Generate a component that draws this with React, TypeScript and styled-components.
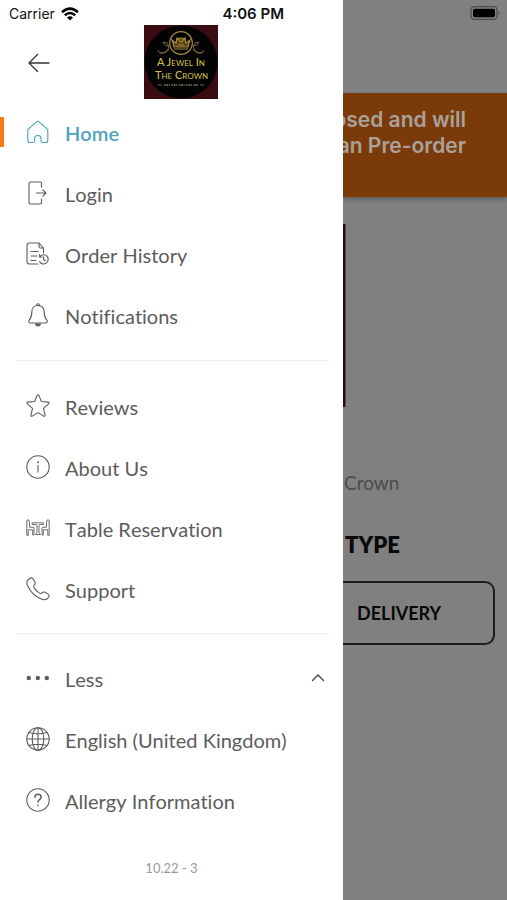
import React from "react";
import styled, { createGlobalStyle } from "styled-components";

const Global = createGlobalStyle`
  *, *::before, *::after { box-sizing: border-box; }
  body { margin: 0; background: #808080; font-family: Lato, sans-serif; font-variant-ligatures: none; }
  button { font: inherit; color: inherit; background: none; border: 0; padding: 0; cursor: pointer; }
`;

const Screen = styled.div`
  display: flex;
  min-height: 100vh;
`;

const Drawer = styled.aside`
  flex: 0 0 343px;
  background: #fff;
  color: #5c5c5c;
`;

const StatusBar = styled.div`
  display: grid;
  grid-template-columns: 1fr auto;
  align-items: center;
  height: 25px;
  padding: 3px 59px 0 9px;
  color: #111;
  font: 500 14px/20px Inter, sans-serif;
`;

const Carrier = styled.span`
  display: flex;
  align-items: center;
  gap: 6px;
  font-weight: 400;
`;

const Time = styled.time`
  font-size: 15px;
  font-weight: 600;
`;

const Header = styled.header`
  display: grid;
  grid-template-columns: 116px auto;
  align-items: center;
  height: 76px;
  padding-left: 28px;
`;

const BackButton = styled.button`
  display: flex;
  width: 22px;
`;

const Logo = styled.svg`
  display: block;
  align-self: start;
`;

const Group = styled.ul`
  list-style: none;
  margin: 0;
  padding: 0;
`;

const Divider = styled.hr<{ $tight?: boolean }>`
  height: 1px;
  margin: ${(p) => (p.$tight ? "14px 14px 13px 16px" : "15px 14px 14px 16px")};
  border: 0;
  background: #ededed;
`;

const ItemLink = styled.a<{ $active?: boolean }>`
  display: flex;
  align-items: center;
  gap: 15px;
  width: 100%;
  height: 61px;
  padding: 0 18px 0 26px;
  color: ${(p) => (p.$active ? "#4ba3bb" : "#5c5c5c")};
  font-size: 20px;
  font-weight: ${(p) => (p.$active ? 600 : 400)};
  text-align: left;
  text-decoration: none;
  background: ${(p) =>
    p.$active ? "linear-gradient(#f47a1c, #f47a1c) 0 16px / 4px 30px no-repeat" : "none"};
`;

const Label = styled.span`
  flex: 1;
  padding-top: 2px;
  line-height: 24px;
  font-kerning: none;
  white-space: nowrap;
`;

const Version = styled.p`
  margin: 28px 0 0;
  text-align: center;
  font-size: 13px;
  line-height: 20px;
  color: #999;
`;

const Page = styled.main`
  flex: 1;
  min-width: 0;
  overflow: hidden;
  background: #808080;
  color: #080808;
`;

const BatteryRow = styled.div`
  display: flex;
  justify-content: flex-end;
  height: 93px;
  padding: 6px 6px 0 0;
`;

const Banner = styled.div`
  display: flex;
  flex-direction: column;
  align-items: flex-end;
  height: 104px;
  padding: 14px 41px 0 0;
  background: #7a3a0a;
  box-shadow: 0 2px 4px rgba(0, 0, 0, 0.3);
  color: #aaa19b;
  font: 600 21px/26px Inter, sans-serif;
  white-space: nowrap;
`;

const Photo = styled.div`
  width: 3px;
  height: 183px;
  margin-top: 27px;
  background: linear-gradient(90deg, #270b10 66%, #55464a 66%);
`;

const ShopName = styled.p`
  margin: 64px 0 0;
  padding-left: 1px;
  font-size: 19px;
  line-height: 24px;
  color: #4b4b4b;
`;

const Heading = styled.h2`
  margin: 36px 0 0;
  padding-left: 2px;
  font-size: 22px;
  font-weight: 800;
  line-height: 28px;
`;

const OrderButton = styled.button`
  display: block;
  width: calc(100% - 12px);
  height: 64px;
  margin-top: 22px;
  padding-left: 14px;
  border: solid #1c1c1c;
  border-width: 2px 2px 2px 0;
  border-radius: 0 10px 10px 0;
  font-size: 18px;
  font-weight: 700;
  text-align: left;
`;

const Line = ({ children }: { children: React.ReactNode }) => (
  <svg width="24" height="24" viewBox="0 0 24 24" fill="none" stroke="currentColor" strokeWidth="1.1" strokeLinecap="round" strokeLinejoin="round" aria-hidden="true">
    {children}
  </svg>
);

const HomeIcon = () => (
  <Line>
    <path d="M1.800 9.700 10.800 1.600q1-.8 2 0L21.800 9.700V20.500q0 2-2 2h-3.300q-1.500 0-1.500-1.500v-3q0-2.500-3.200-2.500T8.600 18v3q0 1.500-1.500 1.500H3.800q-2 0-2-2Z" />
  </Line>
);
const LoginIcon = () => (
  <Line>
    <path d="M15.500 6V2.500q0-1.500-1.500-1.500H4.500Q3 1 3 2.500v19Q3 23 4.500 23H14q1.500 0 1.500-1.500V18M10.500 12h9.500M16.800 8.800 20 12l-3.200 3.200" />
  </Line>
);
const HistoryIcon = () => (
  <Line>
    <path d="M12 22H3.500Q1 22 1 19.500v-16Q1 1 3.500 1H13l4.500 5v5M13 1v3.500Q13 6 14.500 6h3M5 9.500h7M5 14h6M5 18.500h5" />
    <path d="M14 14.500a4.600 4.600 0 1 1-.5 5M13.600 12.500v2.500H16M17.500 15v2.500l2 1.200" />
  </Line>
);
const BellIcon = () => (
  <Line>
    <path d="M12 2.500c-4 0-6.200 3-6.200 6.500 0 4.800-1 6.300-2.600 8.200-1 1.300-.4 2.800 1.300 2.800h15c1.700 0 2.300-1.500 1.300-2.800-1.600-1.900-2.600-3.400-2.600-8.200 0-3.500-2.200-6.500-6.200-6.500ZM10.500 2.500Q10.500.8 12 .8t1.500 1.700" />
    <path d="M9.500 21h5q-.6 2-2.500 2t-2.500-2Z" fill="currentColor" />
  </Line>
);
const StarIcon = () => (
  <Line>
    <path d="M11 1.600q1-1.600 2 0l2.400 5.900 6.700.6q1.700.4.500 1.700l-5.100 4.500 1.600 6.800q.2 1.700-1.400 1L12 18.600l-5.700 3.500q-1.600.7-1.400-1l1.600-6.800L1.400 9.800Q.2 8.500 1.900 8.100l6.700-.6Z" />
  </Line>
);
const InfoIcon = () => (
  <Line>
    <circle cx="12" cy="12" r="11.200" />
    <path d="M12 10.500v6.500" />
    <circle cx="12" cy="7.300" r=".4" fill="currentColor" />
  </Line>
);
const TableIcon = () => (
  <Line>
    <g strokeWidth=".9">
      <path d="M.8 19V5q0-1.200 1.200-1.200T3.200 5l.5 6.300H7q1 0 1 1V19H6.700v-5.200H2.200V19ZM23.200 19V5q0-1.200-1.200-1.200T20.800 5l-.5 6.300H17q-1 0-1 1V19h1.300v-5.200h4.500V19Z" />
      <path d="M6.500 6.800h11v1.700h-3.700q-.8 0-.8 1v7.200l1.500 1.800h-5L11 16.700V9.500q0-1-.8-1H6.500Z" />
    </g>
  </Line>
);
const PhoneIcon = () => (
  <Line>
    <path d="M2.200 2.700 4 1.300Q5.800.3 7.300 2l1.500 2.700q1 1.800-.4 3.200-1.300 1.200-.2 3 1.800 3 4.900 5 1.800 1.200 3-.1 1.400-1.400 3.200-.5l2.800 1.800q1.700 1.200.6 3l-1.500 1.700q-2.200 1.700-6 .2Q6 18.500 1.400 8.500-.1 4.800 2.200 2.700Z" />
  </Line>
);
const DotsIcon = () => (
  <Line>
    <g fill="currentColor" stroke="none">
      <circle cx="2.800" cy="12" r="2.200" />
      <circle cx="11.800" cy="12" r="2.200" />
      <circle cx="20.800" cy="12" r="2.200" />
    </g>
  </Line>
);
const GlobeIcon = () => (
  <Line>
    <circle cx="12" cy="12" r="11.200" />
    <ellipse cx="12" cy="12" rx="5.800" ry="11.200" />
    <path d="M12 .8v22.400M.8 12h22.400M3 5.500q9 2.400 18 0M3 18.500q9-2.400 18 0" />
  </Line>
);
const HelpIcon = () => (
  <Line>
    <circle cx="12" cy="12" r="11.200" />
    <path strokeWidth="1.500" d="M8.900 9.300q0-3 3.100-3t3.100 2.800q0 1.400-1.600 2.500-1.500 1-1.500 2.500M12 17.200v.2" />
  </Line>
);

type Entry = { text: string; icon: React.ReactNode; active?: boolean };

const mainItems: Entry[] = [
  { text: "Home", icon: <HomeIcon />, active: true },
  { text: "Login", icon: <LoginIcon /> },
  { text: "Order History", icon: <HistoryIcon /> },
  { text: "Notifications", icon: <BellIcon /> },
];
const shopItems: Entry[] = [
  { text: "Reviews", icon: <StarIcon /> },
  { text: "About Us", icon: <InfoIcon /> },
  { text: "Table Reservation", icon: <TableIcon /> },
  { text: "Support", icon: <PhoneIcon /> },
];
const extraItems: Entry[] = [
  { text: "English (United Kingdom)", icon: <GlobeIcon /> },
  { text: "Allergy Information", icon: <HelpIcon /> },
];

const Items = ({ items }: { items: Entry[] }) =>
  items.map((item) => (
    <li key={item.text}>
      <ItemLink href="#" $active={item.active} aria-current={item.active ? "page" : undefined}>
        {item.icon}
        <Label>{item.text}</Label>
      </ItemLink>
    </li>
  ));

const CrownLogo = () => (
  <Logo width="74" height="74" viewBox="0 0 74 74" role="img" aria-label="A Jewel In The Crown">
    <rect width="74" height="74" fill="#3a0c12" />
    <circle cx="37" cy="37" r="36.500" fill="#030303" />
    <g fill="none" stroke="#a58a3c" strokeWidth="1.200">
      <circle cx="37" cy="18" r="11.300" />
      <path d="M25 21q-4 1-6-4 5 0 6 4-1 6-7 7-4 0-4-3M25 24q-3 5-9 4M49 21q4 1 6-4-5 0-6 4 1 6 7 7 4 0 4-3M49 24q3 5 9 4" stroke="#857244" strokeWidth=".9" />
      <path d="m30 22-2-7 4 3 1-5 4 4 4-4 1 5 4-3-2 7ZM30 24h14M32 15q5-4 10 0M34 20h6" fill="#5b4416" />
    </g>
    <g fill="#d3c54b" fontFamily="Lato, sans-serif" textAnchor="middle">
      <text x="37" y="41" fontSize="11">A J<tspan fontSize="8">EWEL</tspan> I<tspan fontSize="8">N</tspan></text>
      <text x="37.500" y="54" fontSize="11">T<tspan fontSize="8">HE</tspan> C<tspan fontSize="8">ROWN</tspan></text>
    </g>
    <path d="M14 60h4M56 60h4" stroke="#8d814f" strokeWidth=".8" />
    <path d="M20 60h34" stroke="#827a5c" strokeWidth="1.500" strokeDasharray="1.500 .7 2 .7 1 1.500" />
  </Logo>
);

export default function App() {
  return (
    <>
      <Global />
      <Screen>
        <Drawer>
          <StatusBar>
            <Carrier>
              Carrier
              <svg width="18" height="14" viewBox="0 0 18 14" fill="none" stroke="#000" strokeWidth="2.500" aria-hidden="true">
                <path d="M1 5.200q8-7.200 16 0M3.800 8.300q5.200-4.600 10.400 0" />
                <path d="m9 13.500-3-3q3-2.600 6 0Z" fill="#000" stroke="none" />
              </svg>
            </Carrier>
            <Time>4:06 PM</Time>
          </StatusBar>
          <Header>
            <BackButton aria-label="Back">
              <svg width="22" height="20" viewBox="0 0 22 20" fill="none" stroke="#333" strokeWidth="1.300" strokeLinecap="round" strokeLinejoin="round" aria-hidden="true">
                <path d="M21 10H1M9.500 1.500 1 10l8.500 8.500" />
              </svg>
            </BackButton>
            <CrownLogo />
          </Header>
          <nav aria-label="Main menu">
            <Group>
              <Items items={mainItems} />
            </Group>
            <Divider />
            <Group>
              <Items items={shopItems} />
            </Group>
            <Divider $tight />
            <Group>
              <li>
                <ItemLink as="button" type="button" aria-expanded="true">
                  <DotsIcon />
                  <Label>Less</Label>
                  <svg width="14" height="10" viewBox="0 0 14 10" fill="none" stroke="#444" strokeWidth="1.400" strokeLinecap="round" strokeLinejoin="round" aria-hidden="true">
                    <path d="m1.500 7.500 5.500-5.500 5.500 5.500" />
                  </svg>
                </ItemLink>
              </li>
              <Items items={extraItems} />
            </Group>
          </nav>
          <Version>10.22 - 3</Version>
        </Drawer>
        <Page>
          <BatteryRow>
            <svg width="31" height="14" viewBox="0 0 31 14" aria-label="Battery full" role="img">
              <rect x="1" y=".7" width="26" height="12.600" rx="3.500" fill="none" stroke="#4c4c4c" strokeWidth="1.200" />
              <rect x="3" y="2.700" width="22" height="8.600" rx="1.800" fill="#000" />
              <path d="M28.600 4.700q2 2.300 0 4.600Z" fill="#4c4c4c" />
            </svg>
          </BatteryRow>
          <Banner>
            <span>osed and will</span>
            <span>an Pre-order</span>
          </Banner>
          <Photo />
          <ShopName>Crown</ShopName>
          <Heading>TYPE</Heading>
          <OrderButton type="button">DELIVERY</OrderButton>
        </Page>
      </Screen>
    </>
  );
}
